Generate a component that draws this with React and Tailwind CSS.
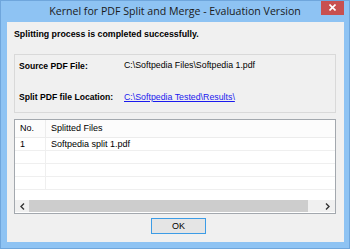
export default function App() {
  const rows = [{ no: '1', name: 'Softpedia split 1.pdf' }, null, null, null];

  return (
    <div
      className="w-[350px] h-[249px] bg-[#8ec3f3] border border-[#6fa6dc] flex flex-col overflow-hidden"
      style={{ fontFamily: '"Liberation Sans", Arial, sans-serif' }}
    >
      {/* title bar */}
      <div className="h-[21px] flex items-start shrink-0">
        <div
          className="flex-1 pl-[28px] pt-[4px] text-center text-[10.6px] leading-[13px] text-[#1a1a1a]"
          style={{ fontFamily: '"Open Sans", "Noto Sans", sans-serif' }}
        >
          Kernel for PDF Split and Merge - Evaluation Version
        </div>
        <div className="w-[23px] h-[15px] mr-[5px] -mt-px bg-[#c8504f] flex items-center justify-center">
          <svg width="7" height="7" viewBox="0 0 7 7">
            <path d="M0.5 0.5 L6.5 6.5 M6.5 0.5 L0.5 6.5" stroke="#fff" strokeWidth="1.6" />
          </svg>
        </div>
      </div>

      {/* body */}
      <div className="flex-1 mx-[6px] mb-[6px] mr-[5px] bg-[#f0f0f0] flex flex-col text-[9px] text-black">
        <div className="pl-[7px] pt-[7px] h-[32px] font-bold leading-[11px] text-[8.8px]">
          Splitting process is completed successfully.
        </div>

        <div className="ml-[7px] mr-[8px] h-[59px] border border-[#d9d9d9] pl-[4px] grid grid-cols-[105px_1fr] content-start">
          <div className="font-bold pt-[6px] leading-[11px] text-[8.6px]">Source PDF File:</div>
          <div className="pt-[5px] leading-[11px] text-[8.8px]">C:\Softpedia Files\Softpedia 1.pdf</div>
          <div className="font-bold pt-[20px] leading-[11px] text-[8.6px]">Split PDF file Location:</div>
          <div className="pt-[20px] leading-[11px] text-[8.8px] text-[#1a1aee] underline">C:\Softpedia Tested\Results\</div>
        </div>

        <div className="ml-[7px] mr-[8px] mt-[6px] h-[95px] border border-[#a3a8ae] bg-white flex flex-col">
          <div className="h-[18px] flex bg-[#fcfcfc] border-b border-[#ececec] leading-[17px]">
            <div className="w-[31px] pl-[5px] border-r border-[#ececec]">No.</div>
            <div className="pl-[5px]">Splitted Files</div>
          </div>
          {rows.map((r, i) => (
            <div key={i} className="h-[13px] flex border-b border-[#efefef] leading-[12px]">
              <div className="w-[31px] pl-[5px] border-r border-[#efefef]">{r ? r.no : ''}</div>
              <div className="pl-[5px]">{r ? r.name : ''}</div>
            </div>
          ))}
          <div className="flex-1" />
          <div className="h-[12px] mb-px flex bg-[#f0f0f0]">
            <div className="w-[14px] flex items-center justify-center">
              <svg width="5" height="7" viewBox="0 0 5 7">
                <path d="M4 0.5 L1 3.5 L4 6.5" fill="none" stroke="#333" strokeWidth="1.4" />
              </svg>
            </div>
            <div className="w-[279px] bg-[#cdcdcd]" />
            <div className="flex-1 flex items-center justify-end pr-[5px]">
              <svg width="5" height="7" viewBox="0 0 5 7">
                <path d="M1 0.5 L4 3.5 L1 6.5" fill="none" stroke="#333" strokeWidth="1.4" />
              </svg>
            </div>
          </div>
        </div>

        <div className="mt-[4px] ml-[144px] w-[55px] h-[16px] border border-[#3c9ce6] bg-[#e5e5e5] flex items-center justify-center leading-none">
          OK
        </div>
      </div>
    </div>
  );
}
